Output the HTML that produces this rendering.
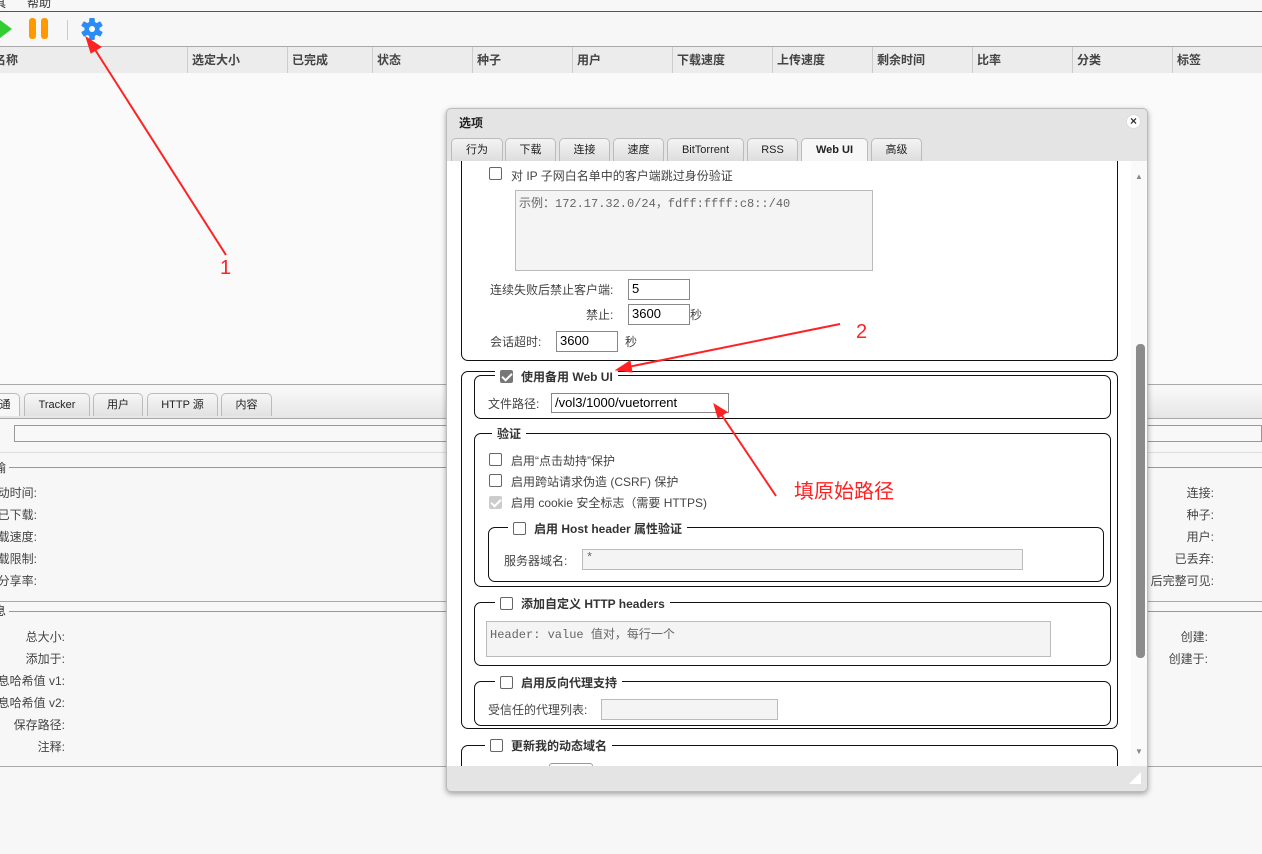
<!DOCTYPE html>
<html><head><meta charset="utf-8"><style>
*{box-sizing:border-box;margin:0;padding:0}
body{width:1262px;height:854px;overflow:hidden;background:#f7f7f7;font-family:"Liberation Sans","Noto Sans CJK SC",sans-serif;font-size:12px;color:#333;position:relative}
.a{position:absolute;white-space:nowrap}
.hl{position:absolute;height:1px;background:#aaa}
.col{position:absolute;top:48px;font-weight:bold;font-size:12px;color:#444}
.cd{position:absolute;top:47px;width:1px;height:26px;background:#ccc}
.btab{position:absolute;top:393px;height:23px;border:1px solid #bbb;border-bottom:none;border-radius:5px 5px 0 0;background:linear-gradient(#f6f6f6,#e2e2e2);font-size:11px;text-align:center;line-height:22px;color:#222}
.lbl{position:absolute;color:#444;font-size:12px;text-align:right;white-space:nowrap}
.dlg{position:absolute;left:446px;top:108px;width:702px;height:684px;background:#e4e4e4;border:1px solid #bbb;border-radius:5px;box-shadow:0 2px 6px rgba(0,0,0,.35);overflow:hidden}
.dtab{position:absolute;top:29px;height:23px;border:1px solid #bbb;border-bottom:none;border-radius:5px 5px 0 0;background:linear-gradient(#f4f4f4,#dedede);font-size:11px;text-align:center;line-height:23px;color:#222}
.fs{position:absolute;border:1px solid #111;border-radius:7px}
.leg{position:absolute;background:#fff;padding:0 5px;font-weight:bold;font-size:12px;color:#333;display:flex;align-items:center;gap:8px;height:16px}
.cb{display:inline-block;width:13px;height:13px;border:1px solid #666;border-radius:2px;background:#fff;vertical-align:middle}
.cbk{background:#777;border-color:#777;position:relative}
.cbk:after{content:"";position:absolute;left:3px;top:0px;width:4px;height:8px;border:solid #fff;border-width:0 2px 2px 0;transform:rotate(45deg)}
.inp{position:absolute;border:1px solid #888;background:#fff;font-size:13px;color:#000;padding-left:3px;line-height:18px}
.ta{position:absolute;border:1px solid #bbb;background:#f4f4f4;font-family:"Liberation Mono","Noto Sans CJK SC",monospace;font-size:12px;color:#666;padding:3px}
.t{position:absolute;font-size:12px;color:#444;white-space:nowrap}
</style></head><body>
<div class="a" style="left:-6px;top:-6px;font-size:12px;color:#333">具</div>
<div class="a" style="left:27px;top:-6px;font-size:12px;color:#333">帮助</div>
<div class="hl" style="left:0;top:11px;width:1262px;background:#555"></div>
<svg class="a" style="left:0;top:17px" width="110" height="24">
<polygon points="0,3 12,12 0,21" fill="#3c3"/>
<rect x="29" y="1" width="7" height="21" rx="3" fill="#f90"/><rect x="41" y="1" width="7" height="21" rx="3" fill="#f90"/>
<line x1="67.5" y1="3" x2="67.5" y2="23" stroke="#ccc"/>
<g transform="translate(92,12)" fill="#2a8cf5"><circle r="7.5"/><g id="t"><rect x="-2.8" y="-11" width="5.6" height="6" rx="1"/></g><use href="#t" transform="rotate(60)"/><use href="#t" transform="rotate(120)"/><use href="#t" transform="rotate(180)"/><use href="#t" transform="rotate(240)"/><use href="#t" transform="rotate(300)"/><circle r="3" fill="#fff"/></g>
</svg>
<div class="hl" style="left:0;top:46px;width:1262px;background:#aaa"></div>
<div class="a" style="left:0;top:47px;width:1262px;height:26px;background:#ececec"></div>
<div class="col" style="left:-6px;top:51px">名称</div><div class="col" style="left:192px;top:51px">选定大小</div><div class="col" style="left:292px;top:51px">已完成</div><div class="col" style="left:377px;top:51px">状态</div><div class="col" style="left:477px;top:51px">种子</div><div class="col" style="left:577px;top:51px">用户</div><div class="col" style="left:677px;top:51px">下载速度</div><div class="col" style="left:777px;top:51px">上传速度</div><div class="col" style="left:877px;top:51px">剩余时间</div><div class="col" style="left:977px;top:51px">比率</div><div class="col" style="left:1077px;top:51px">分类</div><div class="col" style="left:1177px;top:51px">标签</div>
<div class="cd" style="left:187px"></div><div class="cd" style="left:287px"></div><div class="cd" style="left:372px"></div><div class="cd" style="left:472px"></div><div class="cd" style="left:572px"></div><div class="cd" style="left:672px"></div><div class="cd" style="left:772px"></div><div class="cd" style="left:872px"></div><div class="cd" style="left:972px"></div><div class="cd" style="left:1072px"></div><div class="cd" style="left:1172px"></div>
<div class="a" style="left:0;top:73px;width:1262px;height:311px;background:#fafafa"></div>
<div class="hl" style="left:0;top:384px;width:1262px"></div>
<div class="a" style="left:0;top:388px;width:1262px;height:30px;background:linear-gradient(#f8f8f8,#e6e6e6)"></div>
<div class="btab" style="left:-10px;width:30px;background:#f7f7f7">通</div>
<div class="btab" style="left:24px;width:66px">Tracker</div>
<div class="btab" style="left:93px;width:50px">用户</div>
<div class="btab" style="left:147px;width:71px">HTTP 源</div>
<div class="btab" style="left:221px;width:51px">内容</div>
<div class="hl" style="left:0;top:418px;width:1262px"></div>
<div class="a" style="left:-3px;top:426px">:</div>
<div class="a" style="left:14px;top:425px;width:1248px;height:17px;border:1px solid #999;background:#f8f8f8"></div>
<div class="hl" style="left:0;top:452px;width:1262px;background:#ddd"></div>
<div class="a" style="left:-6px;top:459px;font-size:12px">输</div><div class="hl" style="left:9px;top:467px;width:1253px;background:#999"></div>
<div class="lbl" style="right:1225px;top:484px">动时间:</div><div class="lbl" style="right:1225px;top:506px">已下载:</div><div class="lbl" style="right:1225px;top:528px">载速度:</div><div class="lbl" style="right:1225px;top:550px">载限制:</div><div class="lbl" style="right:1225px;top:572px">分享率:</div>
<div class="lbl" style="right:48px;top:484px">连接:</div><div class="lbl" style="right:48px;top:506px">种子:</div><div class="lbl" style="right:48px;top:528px">用户:</div><div class="lbl" style="right:48px;top:550px">已丢弃:</div><div class="lbl" style="right:48px;top:572px">后完整可见:</div>
<div class="hl" style="left:0;top:601px;width:1262px"></div>
<div class="a" style="left:-6px;top:602px">息</div><div class="hl" style="left:9px;top:611px;width:1253px;background:#999"></div>
<div class="lbl" style="right:1197px;top:628px">总大小:</div><div class="lbl" style="right:1197px;top:650px">添加于:</div><div class="lbl" style="right:1197px;top:672px">息哈希值 v1:</div><div class="lbl" style="right:1197px;top:694px">息哈希值 v2:</div><div class="lbl" style="right:1197px;top:716px">保存路径:</div><div class="lbl" style="right:1197px;top:738px">注释:</div>
<div class="lbl" style="right:54px;top:628px">创建:</div><div class="lbl" style="right:54px;top:650px">创建于:</div>
<div class="hl" style="left:0;top:766px;width:1262px"></div>

<div class="dlg">
<div class="a" style="left:12px;top:5px;font-weight:bold;font-size:12px;color:#222">选项</div>
<div class="a" style="left:679px;top:5px;width:15px;height:15px;border-radius:50%;background:#fff;border:1px solid #ddd;font-size:12px;font-weight:bold;text-align:center;line-height:13px">×</div>
<div class="dtab" style="left:4px;width:52px">行为</div><div class="dtab" style="left:58px;width:51px">下载</div><div class="dtab" style="left:112px;width:51px">连接</div><div class="dtab" style="left:166px;width:51px">速度</div><div class="dtab" style="left:220px;width:77px">BitTorrent</div><div class="dtab" style="left:300px;width:51px">RSS</div><div class="dtab" style="left:354px;width:67px;background:#f7f7f7;font-weight:bold;height:24px">Web UI</div><div class="dtab" style="left:424px;width:51px">高级</div>
<div class="a" style="left:0;top:52px;width:700px;height:605px;background:#fff;overflow:hidden">
<div class="a" style="left:684px;top:0;width:16px;height:605px;background:#fafafa"></div>
<div class="a" style="left:688px;top:11px;font-size:8px;color:#888">▲</div>
<div class="a" style="left:688px;top:586px;font-size:8px;color:#888">▼</div>
<div class="a" style="left:689px;top:183px;width:9px;height:314px;border-radius:4px;background:#8b8b8b"></div>

<div class="fs" style="left:14px;top:-20px;width:657px;height:220px;border-top:none;border-radius:0 0 7px 7px"></div>
<span class="cb a" style="left:42px;top:6px"></span><div class="t" style="left:64px;top:6px;font-size:12px">对 IP 子网白名单中的客户端跳过身份验证</div>
<div class="ta" style="left:68px;top:29px;width:358px;height:81px">示例：172.17.32.0/24，fdff:ffff:c8::/40</div>
<div class="t" style="left:43px;top:120px">连续失败后禁止客户端:</div><div class="inp" style="left:181px;top:118px;width:62px;height:21px">5</div>
<div class="t" style="left:139px;top:145px">禁止:</div><div class="inp" style="left:181px;top:143px;width:62px;height:21px">3600</div><div class="t" style="left:243px;top:145px">秒</div>
<div class="t" style="left:43px;top:172px">会话超时:</div><div class="inp" style="left:109px;top:170px;width:62px;height:21px">3600</div><div class="t" style="left:178px;top:172px">秒</div>

<div class="fs" style="left:14px;top:210px;width:657px;height:358px"></div>
<div class="fs" style="left:27px;top:214px;width:637px;height:44px"></div>
<div class="leg" style="left:48px;top:207px"><span class="cb cbk"></span>使用备用 Web UI</div>
<div class="t" style="left:41px;top:234px">文件路径:</div><div class="inp" style="left:104px;top:232px;width:178px;height:20px">/vol3/1000/vuetorrent</div>

<div class="fs" style="left:27px;top:272px;width:637px;height:154px"></div>
<div class="leg" style="left:45px;top:264px">验证</div>
<span class="cb a" style="left:42px;top:292px"></span><div class="t" style="left:64px;top:291px">启用“点击劫持”保护</div>
<span class="cb a" style="left:42px;top:313px"></span><div class="t" style="left:64px;top:312px">启用跨站请求伪造 (CSRF) 保护</div>
<span class="cb cbk a" style="left:42px;top:334px;background:#ccc;border-color:#ccc"></span><div class="t" style="left:64px;top:333px">启用 cookie 安全标志（需要 HTTPS)</div>
<div class="fs" style="left:41px;top:366px;width:616px;height:55px"></div>
<div class="leg" style="left:61px;top:359px"><span class="cb"></span>启用 Host header 属性验证</div>
<div class="t" style="left:57px;top:391px">服务器域名:</div><div class="ta" style="left:135px;top:388px;width:441px;height:21px;padding:1px 3px">*</div>

<div class="fs" style="left:27px;top:441px;width:637px;height:64px"></div>
<div class="leg" style="left:48px;top:434px"><span class="cb"></span>添加自定义 HTTP headers</div>
<div class="ta" style="left:39px;top:460px;width:565px;height:36px">Header: value 值对，每行一个</div>
<div class="fs" style="left:27px;top:520px;width:637px;height:45px"></div>
<div class="leg" style="left:48px;top:513px"><span class="cb"></span>启用反向代理支持</div>
<div class="t" style="left:41px;top:540px">受信任的代理列表:</div><div class="ta" style="left:154px;top:538px;width:177px;height:21px;padding:0"></div>
<div class="fs" style="left:14px;top:584px;width:657px;height:60px"></div>
<div class="leg" style="left:38px;top:576px"><span class="cb"></span>更新我的动态域名</div>
<div class="a" style="left:102px;top:602px;width:44px;height:20px;border:1px solid #999;border-radius:3px"></div>
</div>
<svg class="a" style="left:682px;top:663px" width="12" height="12"><polygon points="12,0 12,12 0,12" fill="#fff"/></svg>
</div>

<svg class="a" style="left:0;top:0" width="1262" height="854">
<g stroke="#f22" fill="#f22">
<line x1="226" y1="255" x2="94" y2="48" stroke-width="2"/><polygon points="86,37 101,47 91,53"/>
<line x1="840" y1="324" x2="628" y2="367" stroke-width="2"/><polygon points="616,370 630,361 632,372"/>
<line x1="776" y1="496" x2="721" y2="414" stroke-width="2"/><polygon points="714,404 727,412 718,418"/>
</g>
<g fill="#f22" stroke="none" font-family="Liberation Sans, sans-serif">
<text x="220" y="274" font-size="20">1</text>
<text x="856" y="338" font-size="20">2</text>
<text x="794" y="498" font-size="20" font-family="Noto Sans CJK SC, sans-serif">填原始路径</text>
</g>
</svg>
</body></html>
